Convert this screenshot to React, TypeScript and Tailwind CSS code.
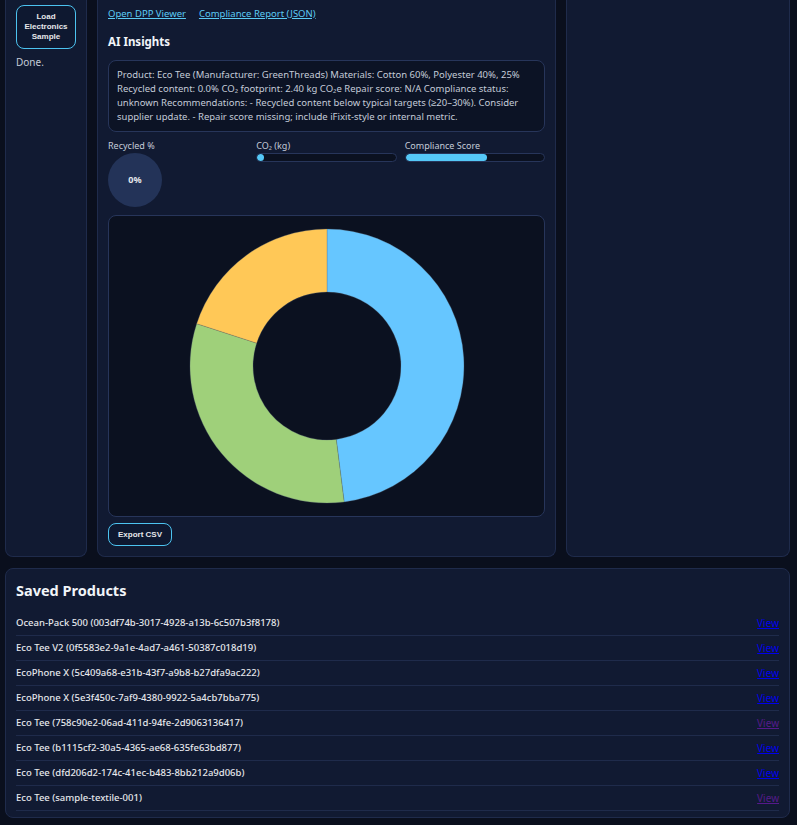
const products = [
  { name: "Ocean-Pack 500", id: "003df74b-3017-4928-a13b-6c507b3f8178", visited: false },
  { name: "Eco Tee V2", id: "0f5583e2-9a1e-4ad7-a461-50387c018d19", visited: false },
  { name: "EcoPhone X", id: "5c409a68-e31b-43f7-a9b8-b27dfa9ac222", visited: false },
  { name: "EcoPhone X", id: "5e3f450c-7af9-4380-9922-5a4cb7bba775", visited: false },
  { name: "Eco Tee", id: "758c90e2-06ad-411d-94fe-2d9063136417", visited: true },
  { name: "Eco Tee", id: "b1115cf2-30a5-4365-ae68-635fe63bd877", visited: false },
  { name: "Eco Tee", id: "dfd206d2-174c-41ec-b483-8bb212a9d06b", visited: false },
  { name: "Eco Tee", id: "sample-textile-001", visited: true },
];

const slices = [
  { value: 60, color: "#66c6ff" },
  { value: 40, color: "#9fd07a" },
  { value: 25, color: "#ffc857" },
];

function arc(cx: number, cy: number, r: number, R: number, a0: number, a1: number) {
  const p = (rad: number, a: number) => [cx + rad * Math.sin(a), cy - rad * Math.cos(a)];
  const large = a1 - a0 > Math.PI ? 1 : 0;
  const [x0, y0] = p(R, a0);
  const [x1, y1] = p(R, a1);
  const [x2, y2] = p(r, a1);
  const [x3, y3] = p(r, a0);
  return `M${x0} ${y0} A${R} ${R} 0 ${large} 1 ${x1} ${y1} L${x2} ${y2} A${r} ${r} 0 ${large} 0 ${x3} ${y3} Z`;
}

const Donut = () => {
  const total = slices.reduce((s, x) => s + x.value, 0);
  let a = 0;
  return (
    <svg width="276" height="276" viewBox="0 0 276 276">
      {slices.map((s, i) => {
        const a0 = a;
        a += (s.value / total) * Math.PI * 2;
        return <path key={i} d={arc(138, 138, 74, 137, a0, a)} fill={s.color} stroke="#5b6b7a" strokeWidth="0.3" />;
      })}
    </svg>
  );
};

const Bar = ({ label, pct }: { label: string; pct: number }) => (
  <div>
    <div className="text-[9px] leading-[12px] text-[#c4cbd8]">{label}</div>
    <div className="mt-[1px] h-[9px] rounded-full border border-[#27355a] bg-[#0b1120] overflow-hidden">
      <div className="h-full rounded-full bg-[#55c8f7]" style={{ width: `${pct}%` }} />
    </div>
  </div>
);

export default function App() {
  return (
    <div className="min-h-[825px] bg-[#0a0f1d] px-[5px] pb-[7px] pr-[7px] font-['Noto_Sans',sans-serif] text-[#e2e8f0]">
      <div className="grid grid-cols-[82px_1fr_224px] gap-x-[10px]">
        <div className="h-[557px] rounded-b-lg border border-t-0 border-[#1f2b4b] bg-[#111a32] px-[10px] pt-[5px]">
          <button className="w-[60px] h-[44px] rounded-lg border border-[#4cc3f0] bg-[#0e1830] font-['Liberation_Sans',sans-serif] text-[8px] font-bold leading-[10px] text-[#e5e7eb]">
            Load Electronics Sample
          </button>
          <div className="mt-[6px] text-[10px] text-[#c4cbd8]">Done.</div>
        </div>

        <div className="h-[557px] rounded-b-lg border border-t-0 border-[#1f2b4b] bg-[#111a32] px-[10px] pt-[7px]">
          <div className="flex gap-[13px] text-[9.5px] leading-[14px]">
            <a className="text-[#5ccbf5] underline">Open DPP Viewer</a>
            <a className="text-[#5ccbf5] underline">Compliance Report (JSON)</a>
          </div>
          <h3 className="mt-[12px] text-[11.5px] font-bold leading-[18px] text-[#f1f5f9]">AI Insights</h3>
          <div className="mt-[9px] rounded-lg border border-[#27355a] bg-[#0c1325] px-[8px] py-[7px] text-[9.5px] leading-[14px] text-[#c4cbd8]">
            Product: Eco Tee (Manufacturer: GreenThreads) Materials: Cotton 60%, Polyester 40%, 25% Recycled content: 0.0% CO₂ footprint: 2.40 kg CO₂e Repair score: N/A Compliance status: unknown Recommendations: - Recycled content below typical targets (≥20–30%). Consider supplier update. - Repair score missing; include iFixit-style or internal metric.
          </div>
          <div className="mt-[8px] grid grid-cols-3 gap-[8px]">
            <div>
              <div className="text-[9px] leading-[12px] text-[#c4cbd8]">Recycled %</div>
              <div className="mt-[1px] flex h-[54px] w-[54px] items-center justify-center rounded-full bg-[#233358] text-[9px] font-bold text-[#e5e7eb]">
                0%
              </div>
            </div>
            <Bar label="CO₂ (kg)" pct={5} />
            <Bar label="Compliance Score" pct={59} />
          </div>
          <div className="mt-[8px] flex h-[302px] items-center justify-center rounded-lg border border-[#27355a] bg-[#0b1120]">
            <Donut />
          </div>
          <button className="mt-[6px] h-[23px] w-[64px] rounded-lg border border-[#4cc3f0] bg-[#0e1830] font-['Liberation_Sans',sans-serif] text-[8px] font-bold text-[#e5e7eb]">
            Export CSV
          </button>
        </div>

        <div className="h-[557px] rounded-b-lg border border-t-0 border-[#1f2b4b] bg-[#111a32]" />
      </div>

      <div className="mt-[11px] rounded-lg border border-[#1f2b4b] bg-[#111a32] px-[10px] pt-[11px] pb-[6px]">
        <h2 className="text-[14.5px] font-bold leading-[20px] text-[#f1f5f9]">Saved Products</h2>
        <ul className="mt-[11px]">
          {products.map((p) => (
            <li key={p.id} className="flex h-[25px] items-center justify-between border-b border-[#1f2b4b] text-[9.5px]">
              <span className="font-medium text-[#e5e7eb]">
                {p.name} ({p.id})
              </span>
              <a className={`text-[10px] underline ${p.visited ? "text-[#551a8b]" : "text-[#0000ee]"}`}>View</a>
            </li>
          ))}
        </ul>
      </div>
    </div>
  );
}
